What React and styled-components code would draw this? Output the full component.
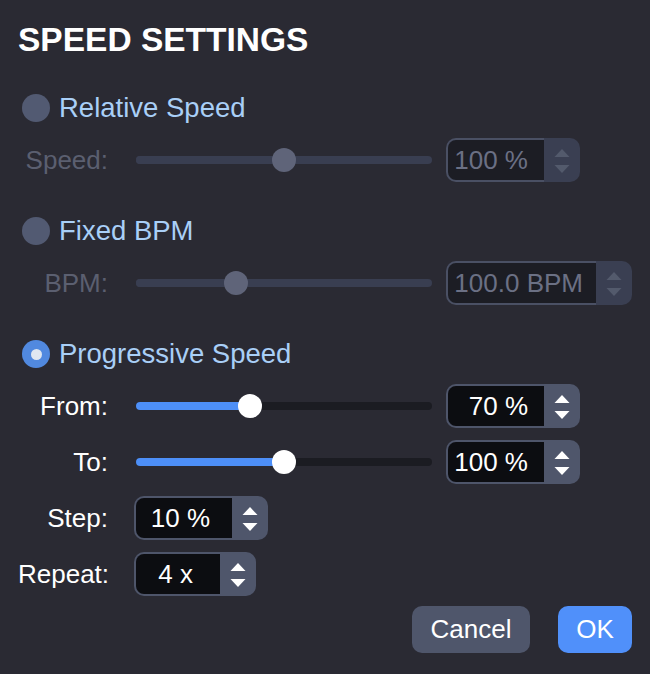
import React from "react";
import styled, { createGlobalStyle } from "styled-components";

const GlobalStyle = createGlobalStyle`
  html, body {
    margin: 0;
    padding: 0;
    background: #2a2a33;
  }
  body {
    font-family: "Liberation Sans", Arial, sans-serif;
  }
`;

const Dialog = styled.div`
  width: 650px;
  height: 674px;
  box-sizing: border-box;
  padding: 20px 18px 0;
  background: #2a2a33;
  display: flex;
  flex-direction: column;
`;

const Title = styled.h1`
  margin: 0;
  font-size: 33.5px;
  line-height: 40px;
  font-weight: 700;
  color: #ffffff;
`;

const Section = styled.div`
  display: flex;
  flex-direction: column;
  gap: 12px;
  margin-top: ${(p) => (p.first ? "33px" : "34px")};
`;

const RadioRow = styled.div`
  display: flex;
  align-items: center;
  gap: 9px;
  height: 30px;
  padding-left: 4px;
  margin-bottom: 3px;
  font-size: 27.5px;
  color: #a9cff7;
`;

const RadioDot = styled.span`
  width: 28px;
  height: 28px;
  border-radius: 50%;
  background: ${(p) => (p.checked ? "#5189df" : "#525a72")};
  display: flex;
  align-items: center;
  justify-content: center;

  &::after {
    content: "";
    display: ${(p) => (p.checked ? "block" : "none")};
    width: 11px;
    height: 11px;
    border-radius: 50%;
    background: #dfe7f1;
  }
`;

const Row = styled.div`
  display: flex;
  align-items: center;
  gap: 12px;
  height: 44px;
`;

const Label = styled.span`
  width: 90px;
  margin-right: 14px;
  text-align: right;
  font-size: 26px;
  white-space: nowrap;
  color: ${(p) => (p.disabled ? "#5b5f70" : "#ffffff")};
`;

const SliderBox = styled.div`
  width: 300px;
  height: 44px;
  padding: 0 2px;
  box-sizing: border-box;
  display: flex;
  align-items: center;
`;

const Track = styled.div`
  position: relative;
  flex: 1;
  height: 8px;
  border-radius: 4px;
  background: ${(p) => (p.disabled ? "#393e51" : "#1b1c22")};
`;

const Fill = styled.div`
  position: absolute;
  left: 0;
  top: 0;
  height: 8px;
  border-radius: 4px;
  background: ${(p) => (p.disabled ? "#393e51" : "#4d8ff8")};
`;

const Thumb = styled.div`
  position: absolute;
  top: -8px;
  width: 24px;
  height: 24px;
  border-radius: 50%;
  background: ${(p) => (p.disabled ? "#5f6479" : "#ffffff")};
`;

const Spin = styled.div`
  display: flex;
  height: 44px;
`;

const Field = styled.div`
  width: ${(p) => p.w}px;
  box-sizing: border-box;
  border: 2px solid ${(p) => (p.disabled ? "#4a5064" : "#4e556a")};
  border-right: none;
  border-radius: 10px 0 0 10px;
  background: ${(p) => (p.disabled ? "#1c1d24" : "#0c0d11")};
  color: ${(p) => (p.disabled ? "#6b7084" : "#ffffff")};
  font-size: 26px;
  line-height: 40px;
  text-align: right;
  padding-right: ${(p) => p.pad}px;
  white-space: nowrap;
`;

const Arrows = styled.div`
  width: 36px;
  border-radius: 0 10px 10px 0;
  background: ${(p) => (p.disabled ? "#3a3f52" : "#4f566b")};
  display: flex;
  align-items: center;
  justify-content: center;
`;

const Footer = styled.div`
  display: flex;
  justify-content: flex-end;
  gap: 28px;
  margin-top: 10px;
`;

const Button = styled.button`
  height: 47px;
  width: ${(p) => p.w}px;
  border: none;
  border-radius: 10px;
  background: ${(p) => (p.primary ? "#5090fa" : "#4f566b")};
  color: #ffffff;
  font-family: "Liberation Sans", Arial, sans-serif;
  font-size: 26px;
  padding: 0;
`;

function SpinBox({ value, width, pad = 16, disabled }) {
  const c = disabled ? "#535a6c" : "#ffffff";
  return (
    <Spin>
      <Field w={width} pad={pad} disabled={disabled}>
        {value}
      </Field>
      <Arrows disabled={disabled}>
        <svg width="16" height="32" viewBox="0 0 16 32">
          <polygon points="0.5,13 8,5 15.5,13" fill={c} />
          <polygon points="0.5,21 8,29 15.5,21" fill={c} />
        </svg>
      </Arrows>
    </Spin>
  );
}

function Slider({ pos, disabled }) {
  return (
    <SliderBox>
      <Track disabled={disabled}>
        <Fill disabled={disabled} style={{ width: pos }} />
        <Thumb disabled={disabled} style={{ left: pos - 12 }} />
      </Track>
    </SliderBox>
  );
}

export default function App() {
  return (
    <>
      <GlobalStyle />
      <Dialog>
        <Title>SPEED SETTINGS</Title>

        <Section first>
          <RadioRow>
            <RadioDot />
            Relative Speed
          </RadioRow>
          <Row>
            <Label disabled>Speed:</Label>
            <Slider pos={148} disabled />
            <SpinBox value="100 %" width={98} disabled />
          </Row>
        </Section>

        <Section>
          <RadioRow>
            <RadioDot />
            Fixed BPM
          </RadioRow>
          <Row>
            <Label disabled>BPM:</Label>
            <Slider pos={100} disabled />
            <SpinBox value="100.0 BPM" width={150} pad={13} disabled />
          </Row>
        </Section>

        <Section>
          <RadioRow>
            <RadioDot checked />
            Progressive Speed
          </RadioRow>
          <Row>
            <Label>From:</Label>
            <Slider pos={114} />
            <SpinBox value="70 %" width={98} />
          </Row>
          <Row>
            <Label>To:</Label>
            <Slider pos={148} />
            <SpinBox value="100 %" width={98} />
          </Row>
          <Row>
            <Label>Step:</Label>
            <SpinBox value="10 %" width={98} pad={22} />
          </Row>
          <Row>
            <Label>Repeat:</Label>
            <SpinBox value="4 x" width={86} pad={27} />
          </Row>
        </Section>

        <Footer>
          <Button w={118}>Cancel</Button>
          <Button w={74} primary>
            OK
          </Button>
        </Footer>
      </Dialog>
    </>
  );
}
